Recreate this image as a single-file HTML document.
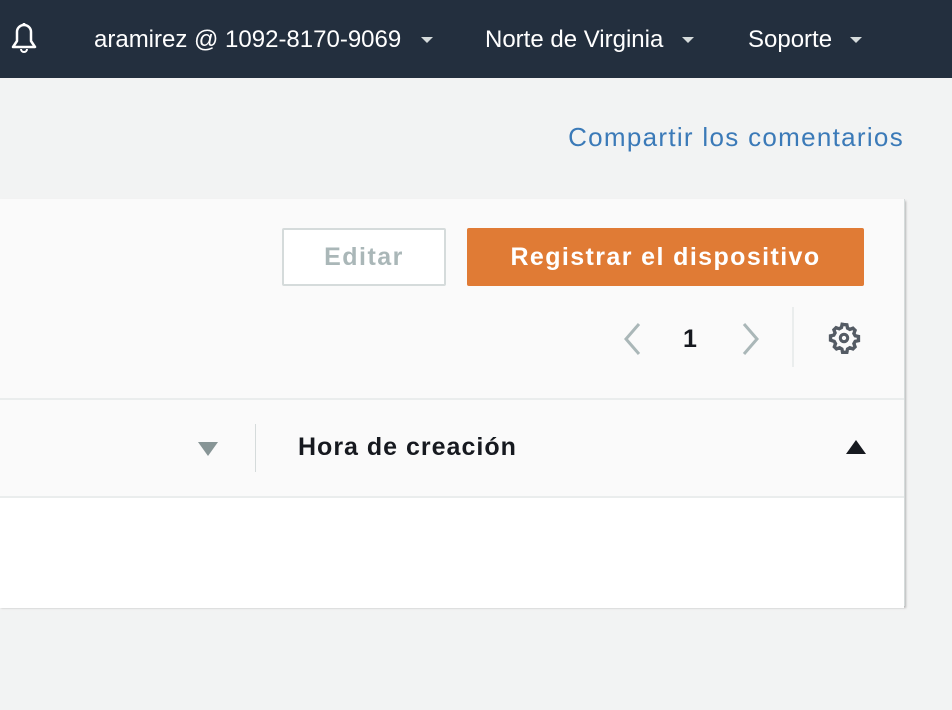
<!DOCTYPE html><html><head><style>
body{margin:0;width:952px;height:710px;background:#f2f3f3;font-family:"Liberation Sans",sans-serif;position:relative;overflow:hidden}
.top{position:absolute;left:0;top:0;width:952px;height:78px;background:#232f3e;color:#fff;font-size:24px}
.t{position:absolute;top:26px}
.car{position:absolute;top:37px;width:0;height:0;border-left:6px solid transparent;border-right:6px solid transparent;border-top:6px solid #d5dbdb}
.fb{position:absolute;right:48px;top:122px;color:#3b7ab8;font-size:26px;letter-spacing:1.3px}
.panel{position:absolute;left:0;top:199px;width:904px;height:407px;background:#fafafa;border-right:1px solid #d5dbdb;box-shadow:1px 2px 2px rgba(0,0,0,.25)}
.btn{position:absolute;top:29px;height:58px;box-sizing:border-box;font-weight:bold;font-size:25px;text-align:center;line-height:58px;border-radius:2px}
</style></head><body>
<div class="top">
<svg style="position:absolute;left:8px;top:20px" width="32" height="38" viewBox="0 0 32 38"><path d="M16 3v3M9 12a7 7 0 0 1 14 0v9l4 6H5l4-6z" fill="none" stroke="#fff" stroke-width="2.5" stroke-linejoin="round"/><path d="M13 29a3 3 0 0 0 6 0" fill="none" stroke="#fff" stroke-width="2"/></svg>
<span class="t" style="left:94px">aramirez @ 1092-8170-9069</span><div class="car" style="left:421px"></div>
<span class="t" style="left:485px">Norte de Virginia</span><div class="car" style="left:682px"></div>
<span class="t" style="left:748px">Soporte</span><div class="car" style="left:850px"></div>
</div>
<div class="fb">Compartir los comentarios</div>
<div class="panel">
<div class="btn" style="left:282px;width:164px;border:2px solid #d5dbdb;color:#aab7b8;background:#fff;line-height:54px;letter-spacing:1.5px">Editar</div>
<div class="btn" style="left:467px;width:397px;background:#e07b35;color:#fff;letter-spacing:1.4px">Registrar el dispositivo</div>
<svg style="position:absolute;left:622px;top:123px" width="20" height="34"><path d="M17 2L4 17l13 15" fill="none" stroke="#aab7b8" stroke-width="3"/></svg>
<div style="position:absolute;left:683px;top:126px;font-weight:bold;font-size:25px;color:#16191f">1</div>
<svg style="position:absolute;left:741px;top:123px" width="20" height="34"><path d="M3 2l13 15L3 32" fill="none" stroke="#aab7b8" stroke-width="3"/></svg>
<div style="position:absolute;left:792px;top:108px;width:2px;height:60px;background:#eaeded"></div>
<svg style="position:absolute;left:827px;top:122px" width="34" height="34" viewBox="0 0 24 24"><path d="M12 2.5l2 .2.5 2.3 1.6.9 2.2-.8 1.5 1.5-.8 2.2.9 1.6 2.3.5v3l-2.3.5-.9 1.6.8 2.2-1.5 1.5-2.2-.8-1.6.9-.5 2.3h-3l-.5-2.3-1.6-.9-2.2.8-1.5-1.5.8-2.2-.9-1.6L2.5 13.5v-3l2.3-.5.9-1.6-.8-2.2 1.5-1.5 2.2.8 1.6-.9.5-2.3z" fill="none" stroke="#545b64" stroke-width="2.4"/><circle cx="12" cy="12" r="2.6" fill="none" stroke="#545b64" stroke-width="2.2"/></svg>
<div style="position:absolute;left:0;top:199px;width:904px;height:2px;background:#eaeded"></div>
<div style="position:absolute;left:198px;top:243px;border-left:10px solid transparent;border-right:10px solid transparent;border-top:14px solid #879596"></div>
<div style="position:absolute;left:255px;top:225px;width:1px;height:48px;background:#d5dbdb"></div>
<div style="position:absolute;left:298px;top:234px;font-weight:bold;font-size:25px;color:#16191f;letter-spacing:1px">Hora de creación</div>
<div style="position:absolute;left:846px;top:241px;border-left:10px solid transparent;border-right:10px solid transparent;border-bottom:14px solid #16191f"></div>
<div style="position:absolute;left:0;top:297px;width:904px;height:110px;background:#fff;border-top:2px solid #eaeded"></div>
</div>
</body></html>
